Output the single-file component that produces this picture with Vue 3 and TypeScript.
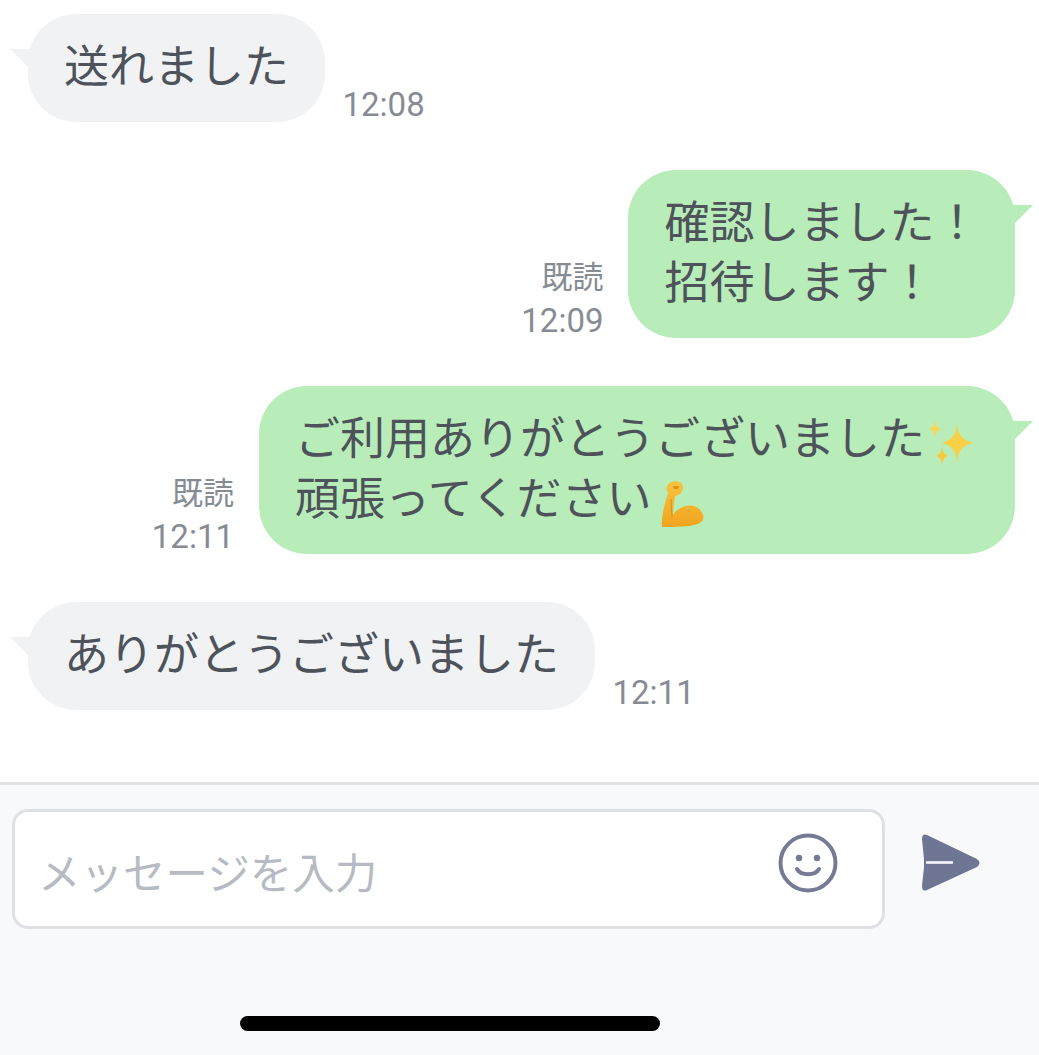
<template>
  <div class="page">
    <div class="messages">
      <div v-for="m in messages" :key="m.time + m.lines[0]" class="row" :class="m.mine ? 'mine' : 'other'">
        <div v-if="m.mine" class="meta">
          <span class="read">既読</span>
          <span class="time">{{ m.time }}</span>
        </div>
        <div class="bubble">
          <div v-for="(line, i) in m.lines" :key="line" class="line">
            {{ line }}
            <svg v-if="m.emoji && i === 0" class="sparkles" viewBox="0 0 50 50">
              <path d="M32 3 C33 15 36 19 48 23 C36 26 33 31 32 43 C31 31 28 26 17 23 C28 19 31 15 32 3Z" fill="#f8cf45" />
              <path d="M10 1 C11 6 12 8 17 9 C12 10 11 12 10 18 C9 12 8 10 3 9 C8 8 9 6 10 1Z" fill="#f9d65a" />
              <path d="M17 28 C18 32 19 34 23 36 C19 37 18 40 17 44 C16 40 15 37 11 36 C15 34 16 32 17 28Z" fill="#f7c93f" />
            </svg>
            <svg v-if="m.emoji && i === 1" class="muscle" viewBox="0 0 44 47">
              <defs>
                <linearGradient id="arm" x1="0" y1="0" x2="0" y2="1">
                  <stop offset="0" stop-color="#f8c440" />
                  <stop offset="1" stop-color="#f0a41f" />
                </linearGradient>
              </defs>
              <path d="M10 1 C15 -1 22 1 22 6 C22 11 18 15 14 15 C13 22 12 28 12 34 C17 25 33 20 40 30 C45 37 42 42 33 44 C24 46 8 46 1 46 C0 35 4 22 7 12 C4 7 6 3 10 1Z" fill="url(#arm)" />
              <path d="M12 5 L18 5 L17 8 L13 8Z" fill="#d6941d" />
              <path d="M10 18 L11 36" stroke="#d18c17" stroke-width="0.9" fill="none" />
            </svg>
          </div>
        </div>
        <div v-if="!m.mine" class="meta">
          <span class="time">{{ m.time }}</span>
        </div>
      </div>
    </div>

    <div class="footer">
      <div class="input-row">
        <div class="input">
          <span class="placeholder">メッセージを入力</span>
          <svg class="smile" viewBox="0 0 60 60">
            <circle cx="30" cy="30" r="27.5" fill="none" stroke="#757b94" stroke-width="4" />
            <circle cx="21" cy="25" r="3.2" fill="#757b94" />
            <circle cx="39" cy="25" r="3.2" fill="#757b94" />
            <path d="M19 36 C23 43 37 43 41 36" fill="none" stroke="#757b94" stroke-width="4" stroke-linecap="round" />
          </svg>
        </div>
        <svg class="send" viewBox="0 0 58 58">
          <path d="M5 1 L55 25 Q60 29 55 33 L5 56 Q0 58 0 52 L2 33 L2 25 L0 5 Q0 -1 5 1Z" fill="#6f7693" />
          <path d="M4 28.5 H31" stroke="#f7f8fa" stroke-width="2.6" />
        </svg>
      </div>
      <div class="home-bar"></div>
    </div>
  </div>
</template>

<script setup lang="ts">
interface Message {
  mine: boolean
  lines: string[]
  time: string
  emoji?: boolean
}

const messages: Message[] = [
  { mine: false, lines: ['送れました'], time: '12:08' },
  { mine: true, lines: ['確認しました！', '招待します！'], time: '12:09' },
  { mine: true, lines: ['ご利用ありがとうございました', '頑張ってください'], time: '12:11', emoji: true },
  { mine: false, lines: ['ありがとうございました'], time: '12:11' }
]
</script>

<style>
html,
body {
  margin: 0;
  background: #fff;
}
</style>

<style scoped>
.page {
  width: 1039px;
  height: 1055px;
  display: flex;
  flex-direction: column;
  overflow: hidden;
  background: #fff;
  font-family: "Noto Sans CJK JP", "Noto Sans", sans-serif;
}
.messages {
  flex: 1;
  display: flex;
  flex-direction: column;
  gap: 48px;
  padding: 14px 24px 0 28px;
}
.row {
  display: flex;
  align-items: flex-end;
}
.mine {
  justify-content: flex-end;
}
.bubble {
  position: relative;
  padding: 20px 35.5px 28px 36px;
  border-radius: 48px;
  font-size: 45px;
  line-height: 60px;
  color: #4d525b;
  white-space: nowrap;
}
.other .bubble {
  background: #f1f2f4;
}
.mine .bubble {
  background: #b8ecb8;
}
.other .bubble::before,
.mine .bubble::after {
  content: "";
  position: absolute;
  top: 35px;
  width: 20px;
  height: 20px;
}
.other .bubble::before {
  left: -18px;
  background: #f1f2f4;
  clip-path: polygon(0 0, 100% 0, 100% 100%);
}
.mine .bubble::after {
  right: -18px;
  background: #b8ecb8;
  clip-path: polygon(0 0, 100% 0, 0 100%);
}
.line {
  display: flex;
  align-items: center;
}
.sparkles {
  width: 50px;
  height: 50px;
  margin: 9px 4.5px -9px 0;
}
.muscle {
  width: 44px;
  height: 47px;
  margin: 8px 0 -8px 10px;
}
.meta {
  display: flex;
  flex-direction: column;
  align-items: flex-end;
  margin-bottom: -4px;
  font-family: Roboto, "Noto Sans CJK JP", sans-serif;
  color: #868c94;
}
.mine .meta {
  margin-right: 25px;
}
.other .meta {
  margin-left: 18px;
}
.read {
  font-size: 31px;
  line-height: 50px;
  font-family: "Noto Sans CJK JP", sans-serif;
}
.time {
  font-size: 33px;
  line-height: 42px;
}
.footer {
  height: 273px;
  box-sizing: border-box;
  display: flex;
  flex-direction: column;
  border-top: 3px solid #e1e2e6;
  background: #f8f9fb;
  padding: 24px 0 24px 12px;
}
.input-row {
  display: flex;
  align-items: center;
}
.input {
  width: 873px;
  height: 120px;
  box-sizing: border-box;
  display: flex;
  align-items: center;
  justify-content: space-between;
  padding: 0 44px 0 23px;
  background: #fff;
  border: 3px solid #dfe0e3;
  border-radius: 16px;
}
.placeholder {
  font-size: 42.5px;
  color: #b6bbc3;
  margin-top: 2px;
}
.smile {
  width: 60px;
  height: 60px;
  margin-bottom: 12px;
}
.send {
  width: 58px;
  height: 58px;
  margin-left: 37px;
  margin-bottom: 12px;
}
.home-bar {
  width: 420px;
  height: 15px;
  margin: auto 0 0 228px;
  border-radius: 8px;
  background: #000;
}
</style>
